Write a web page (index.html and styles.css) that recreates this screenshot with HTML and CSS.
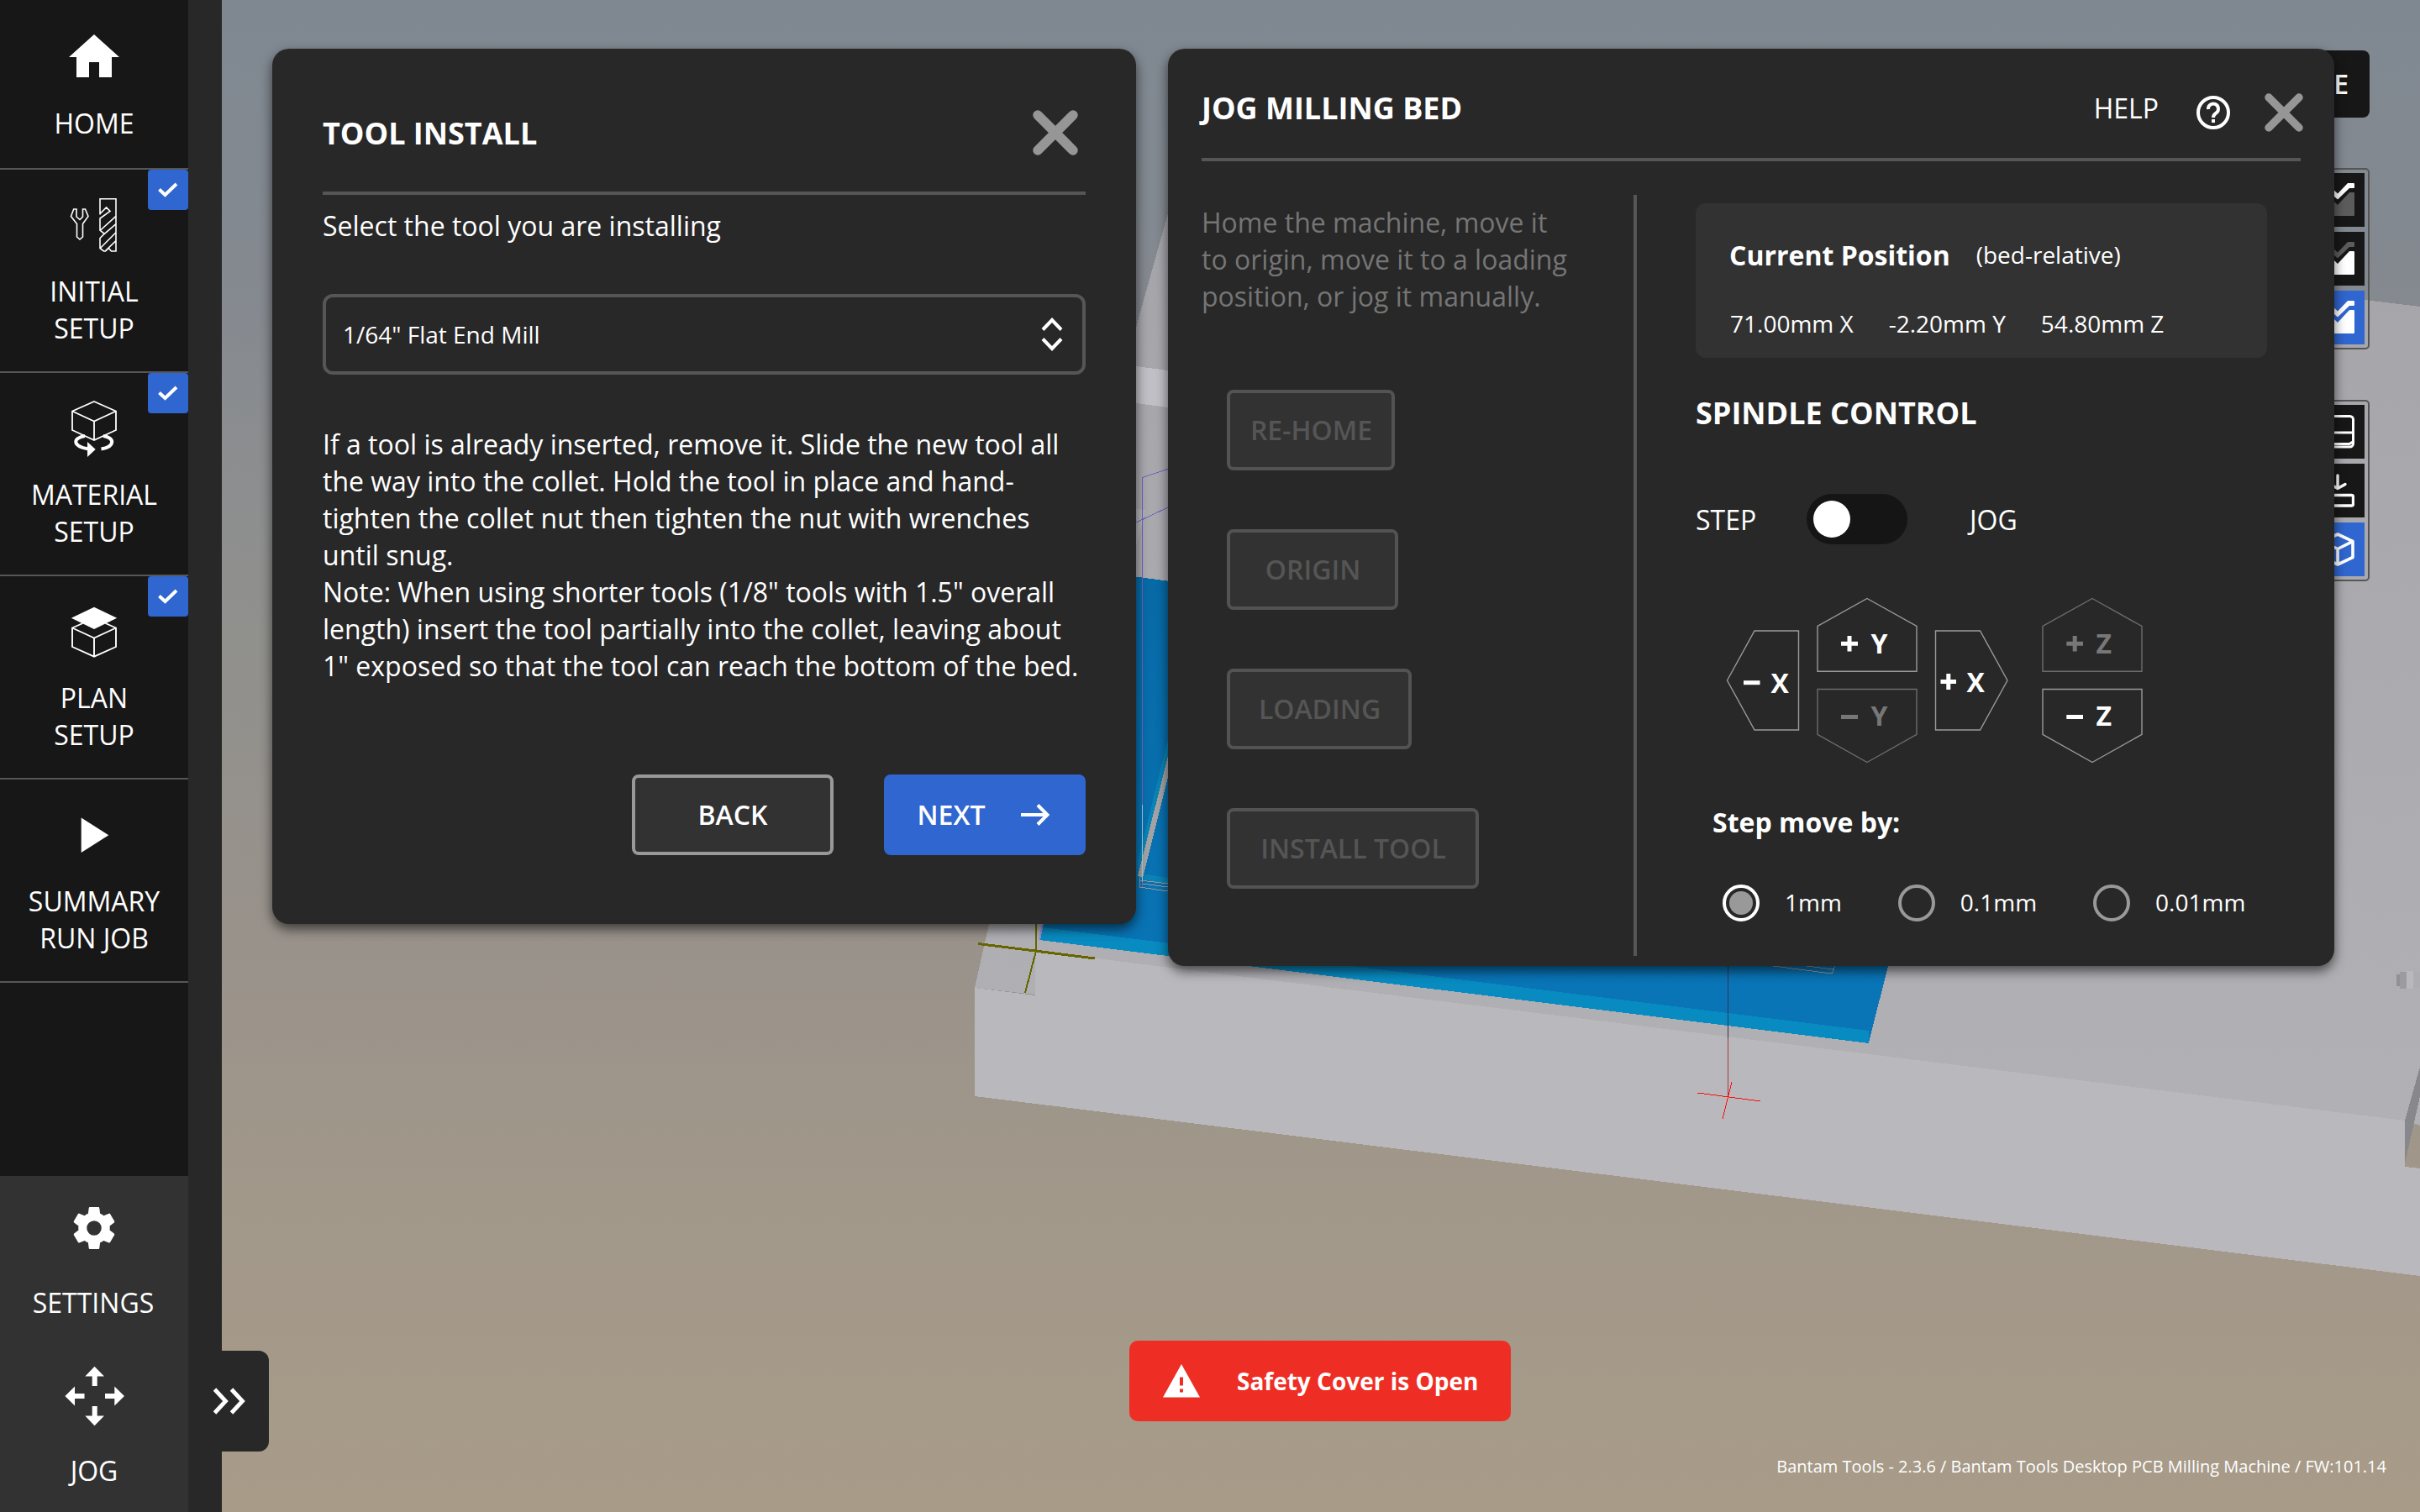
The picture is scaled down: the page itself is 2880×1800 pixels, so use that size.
FILE: index.html
```html
<!DOCTYPE html>
<html lang="en">
<head>
<meta charset="utf-8">
<title>Bantam Tools</title>
<link rel="stylesheet" href="styles.css">
</head>
<body>
<div class="app">
  <svg class="scene" viewBox="0 0 2880 1800" width="2880" height="1800" shape-rendering="crispEdges">
    <defs>
      <linearGradient id="bed" gradientUnits="userSpaceOnUse" x1="0" y1="250" x2="0" y2="1300">
        <stop offset="0" stop-color="#a5a4a9"/><stop offset="1" stop-color="#b1b0b5"/>
      </linearGradient>
      <linearGradient id="plate" gradientUnits="userSpaceOnUse" x1="0" y1="690" x2="0" y2="1200">
        <stop offset="0" stop-color="#076aa6"/><stop offset="1" stop-color="#0975b7"/>
      </linearGradient>
    </defs>
    <polygon fill="url(#bed)" points="1160,1176 1177,1100 1356,375 1390,254 1400,216 2814,357 2880,365 2880,1340 2862,1334 1232,1184"/>
    <polygon fill="#b9b8bd" points="1160,1176 1232,1185 1232,1132 2862,1334 2862,1389 2880,1391 2880,1519 1160,1305"/>
    <polygon fill="#88878c" points="2862,1334 2880,1270 2880,1305 2862,1385"/>
    <g>
      <rect x="2852" y="1160" width="5" height="14" fill="#919095"/>
      <rect x="2856" y="1157" width="8" height="20" fill="#9c9ba0"/>
      <rect x="2864" y="1156" width="8" height="21" fill="#b9b8bd"/>
      <rect x="2872" y="1157" width="8" height="19" fill="#adacb1"/>
    </g>
    <polygon fill="#c0bfc5" points="1352,436 1390,441 1390,485 1352,480"/>
    <polygon fill="#b3b2b7" points="1352,606 1363,607 1361,616 1352,650"/>
    <polygon fill="url(#plate)" points="1340,685 2350,820 2247,1150 2224,1241 1237,1118 1241,1100"/>
    <polygon fill="#088bc1" points="1240,1104 2224,1227 2224,1242 1237,1119"/>
    <polygon fill="#0983b5" points="1390,880 1354,1025 1354,1045 1390,905"/>
    <polygon fill="#0983b5" points="1358,1040 1390,1045 1390,1052 1358,1047"/>
    <polygon fill="#a3a2a5" points="1390,900 1390,925 1360,1045 1354,1043"/>
    <g fill="none" stroke-width="1">
      <path stroke="#6a64c4" d="M1359.500 1057V568.500L1390 558.500M1352 622L1390 604"/>
      <path stroke="#9fd0e0" d="M1359.500 958V1050"/>
      <path stroke="#9c9a98" d="M1356.500 1043V1056M1357 1048L1390 1052M1359 1052L1390 1056M1356 1056L1390 1061"/>
      <path stroke="#9c9a98" d="M2110 1150L2180 1159L2184 1150M2150 1150L2182 1154"/>
      <path stroke="#8f8de0" stroke-width="2" d="M1241 1100L1237 1119"/>
      <path stroke="#666600" stroke-width="3" d="M1164 1123.500L1303 1141"/>
      <path stroke="#666600" stroke-width="2" d="M1233 1100V1132L1220 1182"/>
      <path stroke="#3c2f5c" d="M2056.500 1150V1236"/>
      <path stroke="#a23a3f" d="M2056.500 1236V1306"/>
      <path stroke="#ff0d0d" d="M2020 1301L2095 1311M2061 1288L2050 1332"/>
    </g>
  </svg>

  <nav class="sidebar">
    <div class="nav-item">
      <svg class="nav-icon" width="224" height="125" viewBox="0 0 224 125"><path fill="#fff" d="M112 41L142 68H133V92H118V74H106V92H91V68H82Z"/></svg>
      <span class="nav-label">HOME</span>
    </div>
    <div class="nav-item">
      <svg class="nav-icon" width="224" height="123" viewBox="0 202 224 123">
        <g fill="none" stroke="#fff" stroke-width="1.600">
          <path d="M87.700 249L84.500 257.500L91.500 266.500V282L95 285L98.500 282V266.500L105 257.500L101.500 249H98.500V258L95 261.500L91 258V249Z"/>
          <path d="M119 255.500V236.800H138V299H132.500L129.300 295.500L125.500 299H123.500L119 295.500V283.500L124.300 278.300L119 274V260L131 251.500L126.500 247L119 254.500M119 274.500L138 257.300M124.300 278.300L138 266.700M119.500 295.300L138 276.700M125 299L138 286.700"/>
        </g>
      </svg>
      <span class="nav-label">INITIAL<br>SETUP</span>
      <span class="badge"><svg width="48" height="48" viewBox="0 0 48 48"><path fill="none" stroke="#fff" stroke-width="4" d="M13.500 23.500L20.500 30L34 17"/></svg></span>
    </div>
    <div class="nav-item">
      <svg class="nav-icon" width="224" height="123" viewBox="0 444 224 123">
        <g fill="none" stroke="#fff" stroke-width="1.800">
          <path d="M112 478L138 489.500V512L112 524L86 512V489.500ZM86 489.500L112 501.500L138 489.500M112 501.500V524"/>
          <path stroke-width="4" d="M101 519C87 521 85 531 105 534.500M123 519C137 521 137 532 120.500 534.500"/>
        </g>
        <path fill="#fff" d="M104 526L113.700 535L104 544Z"/>
      </svg>
      <span class="nav-label">MATERIAL<br>SETUP</span>
      <span class="badge"><svg width="48" height="48" viewBox="0 0 48 48"><path fill="none" stroke="#fff" stroke-width="4" d="M13.500 23.500L20.500 30L34 17"/></svg></span>
    </div>
    <div class="nav-item">
      <svg class="nav-icon" width="224" height="123" viewBox="0 686 224 123">
        <path fill="#fff" d="M112 722.800L139.200 735.800L112 749L84.800 735.800Z"/>
        <path fill="none" stroke="#fff" stroke-width="1.900" d="M98.500 742L86 747.500V770L112 781.700L138 770V747.500L125.500 742M86 747.500L112 759.500L138 747.500M112 759.500V781.700"/>
      </svg>
      <span class="nav-label">PLAN<br>SETUP</span>
      <span class="badge"><svg width="48" height="48" viewBox="0 0 48 48"><path fill="none" stroke="#fff" stroke-width="4" d="M13.500 23.500L20.500 30L34 17"/></svg></span>
    </div>
    <div class="nav-item">
      <svg class="nav-icon" width="224" height="123" viewBox="0 928 224 123"><path fill="#fff" d="M96.700 973.500L129.300 994.300L96.700 1015Z"/></svg>
      <span class="nav-label">SUMMARY<br>RUN JOB</span>
    </div>
    <div class="nav-bottom">
      <div class="tool-item">
        <svg class="nav-icon" width="224" height="129" viewBox="0 0 224 129"><path fill="#fff" transform="translate(82 32) scale(2.5)" d="M19.430 12.980c.04-.32.07-.64.07-.98s-.03-.66-.07-.98l2.110-1.650c.19-.15.24-.42.12-.64l-2-3.460c-.12-.22-.39-.3-.61-.22l-2.490 1c-.52-.4-1.080-.73-1.690-.98l-.38-2.650C14.460 2.180 14.250 2 14 2h-4c-.25 0-.46.18-.49.42l-.38 2.650c-.61.25-1.170.59-1.690.98l-2.490-1c-.23-.09-.49 0-.61.22l-2 3.460c-.13.22-.07.49.12.64l2.110 1.650c-.04.32-.07.65-.07.98s.03.66.07.98l-2.110 1.650c-.19.15-.24.42-.12.64l2 3.460c.12.22.39.3.61.22l2.490-1c.52.4 1.080.73 1.690.98l.38 2.650c.03.24.24.42.49.42h4c.25 0 .46-.18.49-.42l.38-2.650c.61-.25 1.170-.59 1.690-.98l2.490 1c.23.09.49 0 .61-.22l2-3.460c.12-.22.07-.49-.12-.64zM12 15.500a3.500 3.500 0 1 1 0-7 3.500 3.500 0 0 1 0 7z"/></svg>
        <span class="nav-label settings">SETTINGS</span>
      </div>
      <div class="tool-item">
        <svg class="nav-icon" width="224" height="129" viewBox="0 1600 224 129"><path fill="#fff" d="M112.500 1626.700L124 1638.500H115.700V1650H109.700V1638.500H101.300ZM112.500 1697.300L124 1685.500H115.700V1674H109.700V1685.500H101.300ZM77.400 1662L89 1650.500V1659H100.500V1665H89V1673.500ZM148 1662L136.300 1650.500V1659H125V1665H136.300V1673.500Z"/></svg>
        <span class="nav-label">JOG</span>
      </div>
    </div>
  </nav>
  <div class="rail">
    <div class="rail-handle"><svg width="56" height="40" viewBox="0 0 56 40"><path fill="none" stroke="#fff" stroke-width="4.800" d="M7.500 6L20.500 20L7.500 34M27.500 6L40.500 20L27.500 34"/></svg></div>
  </div>

  <section class="panel install">
    <header class="install-head">
      <h2>TOOL INSTALL</h2>
      <svg class="close-lg" width="56" height="56" viewBox="0 0 56 56"><path fill="none" stroke="#969696" stroke-width="11.500" stroke-linecap="round" d="M7 7L49 49M49 7L7 49"/></svg>
    </header>
    <p class="prompt">Select the tool you are installing</p>
    <div class="select"><span>1/64" Flat End Mill</span><svg width="26" height="40" viewBox="0 0 26 40"><path fill="none" stroke="#fff" stroke-width="4" d="M2 14.500L13 3L24 14.500M2 25.500L13 37L24 25.500"/></svg></div>
    <p class="copy">If a tool is already inserted, remove it. Slide the new tool all<br>the way into the collet. Hold the tool in place and hand-<br>tighten the collet nut then tighten the nut with wrenches<br>until snug.<br>Note: When using shorter tools (1/8" tools with 1.5" overall<br>length) insert the tool partially into the collet, leaving about<br>1" exposed so that the tool can reach the bottom of the bed.</p>
    <div class="actions">
      <button class="btn back">BACK</button>
      <button class="btn next"><span>NEXT</span><svg width="34" height="26" viewBox="0 0 34 26"><path fill="none" stroke="#fff" stroke-width="4" d="M0 13H31M20 1.500L31.500 13L20 24.500"/></svg></button>
    </div>
  </section>

  <div class="view-tools">
    <div class="mode-btn">E</div>
    <div class="tool-group">
      <div class="cell"><svg width="40" height="40" viewBox="0 0 40 40"><path fill="#fff" d="M0 6L10 3L20 12.600L32 0H39Q40 0 40 1V5Q40 6 39 6H34L20 19.500L9 10L0 12Z"/><path fill="#5c5c5c" d="M0 17L9 15L20 26L34 11H39Q40 11 40 12V38Q40 39 39 39H0Z"/></svg></div>
      <div class="cell"><svg width="40" height="40" viewBox="0 0 40 40"><path fill="#5c5c5c" d="M0 6L10 3L20 12.600L32 0H39Q40 0 40 1V5Q40 6 39 6H34L20 19.500L9 10L0 12Z"/><path fill="#fff" d="M0 17L9 15L20 26L34 11H39Q40 11 40 12V38Q40 39 39 39H0Z"/></svg></div>
      <div class="cell on"><svg width="40" height="40" viewBox="0 0 40 40"><path fill="#fff" d="M0 6L10 3L20 12.600L32 0H39Q40 0 40 1V5Q40 6 39 6H34L20 19.500L9 10L0 12Z"/><path fill="#fff" d="M0 17L9 15L20 26L34 11H39Q40 11 40 12V38Q40 39 39 39H0Z"/></svg></div>
    </div>
    <div class="tool-group second">
      <div class="cell"><svg width="40" height="40" viewBox="0 0 40 40"><rect x="1.500" y="1.500" width="37" height="36.500" rx="4" fill="none" stroke="#fff" stroke-width="3"/><path stroke="#fff" stroke-width="3" fill="none" d="M2 21H38M2 34.500H34L38 32"/></svg></div>
      <div class="cell"><svg width="40" height="40" viewBox="0 0 40 40"><path fill="none" stroke="#fff" stroke-width="3.400" stroke-linecap="round" stroke-linejoin="round" d="M20 2V17M10.500 12L20 17.500L29 12.500"/><rect x="1.500" y="25.500" width="37" height="12.500" rx="2" fill="none" stroke="#fff" stroke-width="3.400"/></svg></div>
      <div class="cell on"><svg width="40" height="40" viewBox="0 0 40 40"><path fill="none" stroke="#fff" stroke-width="3.600" stroke-linejoin="round" d="M20 2L38 10.500V29.500L20 38L2 29.500V10.500ZM2 10.500L20 19.500L38 10.500M20 19.500V38"/></svg></div>
    </div>
  </div>

  <section class="panel jog">
    <header class="jog-head">
      <h2>JOG MILLING BED</h2>
      <span class="help">HELP</span>
      <svg class="help-icon" width="40" height="40" viewBox="0 0 40 40"><circle cx="20" cy="20" r="18" fill="none" stroke="#fff" stroke-width="4"/><path fill="none" stroke="#fff" stroke-width="4" d="M14 16A6 6 0 1 1 24 20C21.500 22 20 22.500 20 26"/><rect x="18" y="28" width="4" height="4" fill="#fff"/></svg>
      <svg class="close-sm" width="48" height="48" viewBox="0 0 48 48"><path fill="none" stroke="#969696" stroke-width="9.500" stroke-linecap="round" d="M6 6L42 42M42 6L6 42"/></svg>
    </header>
    <div class="jog-body">
      <div class="jog-left">
        <p class="hint">Home the machine, move it<br>to origin, move it to a loading<br>position, or jog it manually.</p>
        <div class="moves">
          <button class="btn off w-home">RE-HOME</button>
          <button class="btn off w-origin">ORIGIN</button>
          <button class="btn off w-load">LOADING</button>
          <button class="btn off w-install">INSTALL TOOL</button>
        </div>
      </div>
      <div class="jog-right">
        <div class="position">
          <div class="pos-title"><b>Current Position</b><span>(bed-relative)</span></div>
          <div class="pos-values"><span>71.00mm X</span><span>-2.20mm Y</span><span>54.80mm Z</span></div>
        </div>
        <h2 class="spindle">SPINDLE CONTROL</h2>
        <div class="mode"><span class="step">STEP</span><span class="toggle"><i></i></span><span class="jog-word">JOG</span></div>
        <svg class="pad" width="500" height="200" viewBox="2054 710 500 200">
          <g fill="none" stroke="#9a9a9a" stroke-width="1.400">
            <path d="M2222 712.500L2281 745.500V799.300H2163V745.500Z"/>
            <path d="M2055.500 810L2088 751H2140.500V869H2088Z"/>
            <path d="M2389 810L2356.500 751H2303.500V869H2356.500Z"/>
            <path d="M2490 907.500L2549 874.300V820.500H2431V874.300Z"/>
            <path stroke="#6c6c6c" d="M2222 907.500L2281 874.300V820.500H2163V874.300Z"/>
            <path stroke="#6c6c6c" d="M2490 712.500L2549 745.500V799.300H2431V745.500Z"/>
          </g>
          <g stroke="#fff" stroke-width="5">
            <path d="M2191 766.300H2211M2201 757V775.500"/>
            <path d="M2075 812.700H2094.500"/>
            <path d="M2309.500 811.500H2328M2318.800 802V821"/>
            <path d="M2459.300 853.500H2479"/>
            <path stroke="#777" d="M2191 853.500H2211"/>
            <path stroke="#777" d="M2459.300 766.300H2479M2469.200 757V775.500"/>
          </g>
          <g class="axis">
            <text x="2226.500" y="778">Y</text>
            <text x="2107.500" y="825">X</text>
            <text x="2340.500" y="823.500">X</text>
            <text x="2494.500" y="864">Z</text>
            <text class="dim" x="2226.500" y="864">Y</text>
            <text class="dim" x="2494.500" y="778">Z</text>
          </g>
        </svg>
        <b class="step-title">Step move by:</b>
        <div class="radios">
          <label><i class="radio sel"></i><span>1mm</span></label>
          <label><i class="radio"></i><span>0.1mm</span></label>
          <label><i class="radio"></i><span>0.01mm</span></label>
        </div>
      </div>
    </div>
  </section>

  <div class="alert">
    <svg width="44" height="40" viewBox="0 0 44 40"><path fill="#fff" d="M22 0L44 39.500H0Z"/><path fill="#ee2e24" d="M20 15.500H24V25.500H20ZM20 29.500H24V33.500H20Z"/></svg>
    <span>Safety Cover is Open</span>
  </div>
  <footer class="version">Bantam Tools - 2.3.6 / Bantam Tools Desktop PCB Milling Machine / FW:101.14</footer>
</div>
</body>
</html>
```
FILE: styles.css
```css
* { box-sizing: border-box; margin: 0; padding: 0; }
body { font-family: "Open Sans", "Noto Sans", sans-serif; font-size: 32px; line-height: 44px; color: #fff; }
svg { display: block; flex: none; }
i { font-style: normal; }
h2 { font-size: 36px; line-height: 49px; font-weight: 700; }

.app {
  position: relative; display: flex; width: 2880px; height: 1800px; overflow: hidden;
  background: linear-gradient(#7f8891 0%, #848990 18%, #8d8e8f 33%, #90908d 42%, #99928b 62%, #a2988a 80%, #a89b88 100%);
}
.scene { position: absolute; inset: 0; }

.sidebar { position: relative; display: flex; flex-direction: column; width: 224px; background: #171717; }
.nav-item { position: relative; height: 242px; border-bottom: 2px solid #565656; text-align: center; }
.nav-item:first-child { height: 202px; }
.nav-label { display: block; text-align: center; white-space: nowrap; }
.settings { padding-right: 2px; }
.badge { position: absolute; top: 0; right: 0; width: 48px; height: 48px; border-radius: 4px; background: #3066cf; }
.nav-bottom { margin-top: auto; height: 400px; background: #323232; }
.tool-item { height: 200px; }

.rail { position: relative; width: 40px; background: #282828; }
.rail-handle {
  position: absolute; left: 0; top: 1608px; width: 96px; height: 120px; padding-left: 24px;
  display: flex; align-items: center; background: #282828; border-radius: 0 12px 12px 0;
}

.panel { position: absolute; top: 58px; background: #282828; border-radius: 20px; box-shadow: 0 6px 14px rgba(0, 0, 0, .6); }
.install { left: 324px; width: 1028px; height: 1042px; padding: 0 60px; }
.install-head { display: flex; align-items: center; justify-content: space-between; height: 174px; padding: 30px 8px 0 0; border-bottom: 4px solid #565656; }
.prompt { margin-top: 15px; }
.select {
  display: flex; align-items: center; justify-content: space-between; height: 96px; margin-top: 59px;
  padding: 0 23px 0 20px; border: 4px solid #565656; border-radius: 12px; font-size: 28px;
}
.select span { margin-bottom: 1px; }
.copy { margin-top: 61px; white-space: nowrap; }
.actions { display: flex; justify-content: flex-end; gap: 60px; margin-top: 107px; }
.btn {
  display: flex; align-items: center; justify-content: center; height: 96px; border: 4px solid #999; border-radius: 8px;
  background: #323232; color: #fff; font: 600 32px/44px "Open Sans", "Noto Sans", sans-serif; white-space: nowrap;
}
.back { width: 240px; }
.next { width: 240px; gap: 43px; padding-right: 3px; background: #3066cf; border-color: #3066cf; }

.view-tools { position: absolute; top: 60px; right: 60px; display: flex; flex-direction: column; align-items: flex-end; }
.mode-btn { display: flex; align-items: center; justify-content: flex-end; width: 120px; height: 80px; padding-right: 25px; border-radius: 8px; background: #171717; font-weight: 600; }
.tool-group { display: flex; flex-direction: column; gap: 6px; margin-top: 60px; padding: 4px; border: 2px solid #555; border-radius: 5px; }
.cell { display: flex; align-items: center; justify-content: center; width: 64px; height: 64px; background: #171717; }
.cell.on { background: #3066cf; }

.jog { left: 1390px; width: 1388px; height: 1092px; padding: 0 40px; }
.jog-head { display: flex; align-items: center; height: 134px; padding-top: 12px; border-bottom: 4px solid #565656; }
.jog-head h2 { margin-bottom: 1px; }
.help { margin-left: auto; margin-right: 45px; }
.help-icon { margin-top: 10px; }
.close-sm { margin: 10px -4px 0 40px; }
.jog-body { display: flex; }
.jog-left { width: 518px; height: 906px; margin-top: 40px; padding-top: 11px; border-right: 4px solid #565656; }
.hint { color: #757575; white-space: nowrap; }
.moves { display: flex; flex-direction: column; gap: 70px; margin: 89px 0 0 30px; }
.off { padding-left: 1px; border-color: #535353; color: #555; }
.w-home { width: 200px; }
.w-origin { width: 204px; }
.w-load { width: 220px; }
.w-install { width: 300px; }
.jog-right { padding: 50px 0 0 70px; }
.position { width: 680px; height: 184px; padding: 40px; border-radius: 12px; background: #323232; }
.pos-title { display: flex; align-items: center; gap: 31px; }
.pos-title span, .pos-values { font-size: 28px; line-height: 38px; }
.pos-title span { margin-bottom: 2px; }
.pos-values { display: flex; gap: 42px; margin-top: 40px; padding-left: 1px; }
.spindle { margin-top: 41px; }
.mode { display: flex; align-items: center; margin-top: 72px; }
.step, .jog-word { margin-top: 1px; }
.step { width: 132px; }
.toggle { width: 120px; height: 60px; padding: 8px; border-radius: 30px; background: #151515; }
.toggle i { display: block; width: 44px; height: 44px; border-radius: 50%; background: #fff; }
.jog-word { margin-left: 74px; }
.pad { margin: 62px 0 0 36px; }
.axis text { font-size: 32px; font-weight: 700; fill: #fff; }
.axis .dim { fill: #777; }
.step-title { display: block; margin: 47px 0 0 20px; }
.radios { display: flex; gap: 67px; margin: 51px 0 0 32px; font-size: 28px; }
.radios label { display: flex; align-items: center; gap: 30px; }
.radios span { margin-bottom: 1px; }
.radio { width: 44px; height: 44px; border: 4px solid #999; border-radius: 50%; }
.radio.sel { padding: 4px; border-color: #fff; background: #999 content-box; }

.alert {
  position: absolute; left: 1344px; top: 1596px; display: flex; align-items: center; gap: 44px; width: 454px; height: 96px;
  padding-left: 40px; border-radius: 10px; background: #ee2e24; font-size: 28px; font-weight: 700; white-space: nowrap;
}
.alert span { margin-bottom: 1px; }
.version { position: absolute; right: 40px; bottom: 32px; font-size: 20px; white-space: nowrap; }
```
